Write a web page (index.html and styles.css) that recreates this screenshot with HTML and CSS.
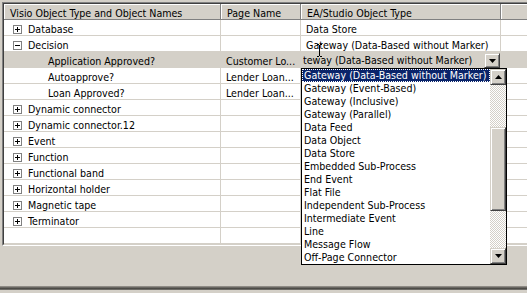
FILE: index.html
```html
<!DOCTYPE html>
<html>
<head>
<meta charset="utf-8">
<link rel="stylesheet" href="styles.css">
</head>
<body>
<div class="window">
  <div class="grid">
    <div class="grid-in">
      <div class="row head">
        <div class="c c1">Visio Object Type and Object Names</div>
        <div class="c c2">Page Name</div>
        <div class="c c3">EA/Studio Object Type</div>
        <div class="c c4"></div>
      </div>
      <div class="row">
        <div class="c c1"><span class="exp plus"></span><span class="t">Database</span></div>
        <div class="c c2"></div>
        <div class="c c3"><span class="t">Data Store</span></div>
        <div class="c c4"></div>
      </div>
      <div class="row">
        <div class="c c1"><span class="exp"></span><span class="t">Decision</span></div>
        <div class="c c2"></div>
        <div class="c c3"><span class="t">Gateway (Data-Based without Marker)</span></div>
        <div class="c c4"></div>
      </div>
      <div class="row cur">
        <div class="c c1 child"><span class="t">Application Approved?</span></div>
        <div class="c c2"><span class="t">Customer Lo...</span></div>
        <div class="c c3 edit"><span class="t ct">teway (Data-Based without Marker)</span><span class="cbtn"><svg width="7" height="4" viewBox="0 0 7 4"><path d="M0 0h7L3.5 4z" fill="#000"/></svg></span></div>
        <div class="c c4"></div>
      </div>
      <div class="row">
        <div class="c c1 child"><span class="t">Autoapprove?</span></div>
        <div class="c c2"><span class="t">Lender Loan...</span></div>
        <div class="c c3"></div>
        <div class="c c4"></div>
      </div>
      <div class="row">
        <div class="c c1 child"><span class="t">Loan Approved?</span></div>
        <div class="c c2"><span class="t">Lender Loan...</span></div>
        <div class="c c3"></div>
        <div class="c c4"></div>
      </div>
      <div class="row">
        <div class="c c1"><span class="exp plus"></span><span class="t">Dynamic connector</span></div>
        <div class="c c2"></div><div class="c c3"></div><div class="c c4"></div>
      </div>
      <div class="row">
        <div class="c c1"><span class="exp plus"></span><span class="t">Dynamic connector.12</span></div>
        <div class="c c2"></div><div class="c c3"></div><div class="c c4"></div>
      </div>
      <div class="row">
        <div class="c c1"><span class="exp plus"></span><span class="t">Event</span></div>
        <div class="c c2"></div><div class="c c3"></div><div class="c c4"></div>
      </div>
      <div class="row">
        <div class="c c1"><span class="exp plus"></span><span class="t">Function</span></div>
        <div class="c c2"></div><div class="c c3"></div><div class="c c4"></div>
      </div>
      <div class="row">
        <div class="c c1"><span class="exp plus"></span><span class="t">Functional band</span></div>
        <div class="c c2"></div><div class="c c3"></div><div class="c c4"></div>
      </div>
      <div class="row">
        <div class="c c1"><span class="exp plus"></span><span class="t">Horizontal holder</span></div>
        <div class="c c2"></div><div class="c c3"></div><div class="c c4"></div>
      </div>
      <div class="row">
        <div class="c c1"><span class="exp plus"></span><span class="t">Magnetic tape</span></div>
        <div class="c c2"></div><div class="c c3"></div><div class="c c4"></div>
      </div>
      <div class="row">
        <div class="c c1"><span class="exp plus"></span><span class="t">Terminator</span></div>
        <div class="c c2"></div><div class="c c3"></div><div class="c c4"></div>
      </div>
      <div class="row">
        <div class="c c1"></div>
        <div class="c c2"></div><div class="c c3"></div><div class="c c4"></div>
      </div>
    </div>
  </div>
  <div class="edge"></div>

  <div class="listbox">
    <div class="items">
      <div class="item sel">Gateway (Data-Based without Marker)</div>
      <div class="item">Gateway (Event-Based)</div>
      <div class="item">Gateway (Inclusive)</div>
      <div class="item">Gateway (Parallel)</div>
      <div class="item">Data Feed</div>
      <div class="item">Data Object</div>
      <div class="item">Data Store</div>
      <div class="item">Embedded Sub-Process</div>
      <div class="item">End Event</div>
      <div class="item">Flat File</div>
      <div class="item">Independent Sub-Process</div>
      <div class="item">Intermediate Event</div>
      <div class="item">Line</div>
      <div class="item">Message Flow</div>
      <div class="item">Off-Page Connector</div>
    </div>
    <div class="sb">
      <div class="btn"><svg width="7" height="4" viewBox="0 0 7 4"><path d="M3.5 0L7 4H0z" fill="#000"/></svg></div>
      <div class="track top"></div>
      <div class="btn thumb"></div>
      <div class="track bot"></div>
      <div class="btn"><svg width="7" height="4" viewBox="0 0 7 4"><path d="M0 0h7L3.5 4z" fill="#000"/></svg></div>
    </div>
  </div>

  <svg class="ibeam" width="9" height="16" viewBox="0 0 9 16"><path d="M2 1.5h2M5 1.5h2M4.5 2v11M2 13.5h2M5 13.5h2" stroke="#000" stroke-width="1" fill="none"/></svg>
</div>
</body>
</html>
```

FILE: styles.css
```css
html, body {
  margin: 0;
  padding: 0;
  overflow: hidden;
}
body {
  background: #d4d0c8;
  font-family: "DejaVu Sans Condensed", "DejaVu Sans", sans-serif;
  font-stretch: semi-condensed;
  font-size: 10.6px;
  color: #000;
}
.window {
  position: relative;
  width: 527px;
  height: 293px;
  overflow: hidden;
}
.grid {
  margin: 2px 0 0 2px;
  width: 560px;
  border-top: 1px solid #808080;
  border-left: 1px solid #808080;
  border-bottom: 1px solid #fff;
}
.grid-in {
  border-top: 1px solid #404040;
  border-left: 1px solid #404040;
  border-bottom: 1px solid #d4d0c8;
  background: #fff;
}
.row {
  display: grid;
  grid-template-columns: 217px 80px 200px 1fr;
  height: 16px;
}
.c {
  box-sizing: border-box;
  height: 16px;
  border-right: 1px solid #d4d0c8;
  border-bottom: 1px solid #d4d0c8;
  display: flex;
  align-items: flex-start;
  white-space: nowrap;
  padding-left: 5px;
}
.c4 { border-right: none; }
.c1 { padding-left: 9px; }
.c1.child { padding-left: 44px; }
.t {
  line-height: 14px;
  margin-top: 2px;
}
.head .c {
  background: #d4d0c8;
  border-right: 1px solid #808080;
  border-bottom: 1px solid #808080;
  box-shadow: inset 1px 1px 0 #fff;
  padding-left: 6px;
  line-height: 14px;
  padding-top: 2px;
}
.head .c4 { border-right: none; }
.cur { background: #d4d0c8; }
.exp {
  flex: none;
  position: relative;
  width: 9px;
  height: 9px;
  box-sizing: border-box;
  border: 1px solid #808080;
  background: #fff;
  margin: 5px 6px 0 0;
}
.exp::before {
  content: "";
  position: absolute;
  left: 1px;
  top: 3px;
  width: 5px;
  height: 1px;
  background: #000;
}
.exp.plus::after {
  content: "";
  position: absolute;
  left: 3px;
  top: 1px;
  width: 1px;
  height: 5px;
  background: #000;
}
.edit { padding-left: 2px; }
.ct {
  flex: 1;
  margin-top: 1px;
  overflow: hidden;
}
.cbtn {
  flex: none;
  width: 16px;
  height: 15px;
  margin-top: 1px;
  box-sizing: border-box;
  background: #d4d0c8;
  border: 1px solid;
  border-color: #d4d0c8 #404040 #404040 #d4d0c8;
  box-shadow: inset 1px 1px 0 #fff, inset -1px -1px 0 #808080;
  display: flex;
  align-items: center;
  justify-content: center;
}
.cbtn svg { display: block; }
.edge {
  margin-top: 40px;
  height: 4px;
  background: linear-gradient(#a09c96, #4a4844 60%, #7c7a76);
}
.listbox {
  position: absolute;
  left: 301px;
  top: 68px;
  width: 206px;
  height: 197px;
  box-sizing: border-box;
  border: 1px solid #000;
  background: #fff;
  display: flex;
}
.items {
  flex: 1;
  min-width: 0;
}
.item {
  height: 13px;
  line-height: 13px;
  padding-left: 2px;
  white-space: nowrap;
  overflow: hidden;
}
.item.sel {
  background: #0a246a;
  color: #fff;
  outline: 1px dotted #fff;
  outline-offset: -1px;
}
.sb {
  width: 16px;
  flex: none;
  display: flex;
  flex-direction: column;
}
.btn {
  flex: none;
  width: 16px;
  height: 16px;
  box-sizing: border-box;
  background: #d4d0c8;
  border: 1px solid;
  border-color: #d4d0c8 #404040 #404040 #d4d0c8;
  box-shadow: inset 1px 1px 0 #fff, inset -1px -1px 0 #808080;
  display: flex;
  align-items: center;
  justify-content: center;
}
.btn svg { display: block; }
.track {
  background: repeating-conic-gradient(#d4d0c8 0 25%, #fff 0 50%) 0 0 / 2px 2px;
}
.track.top { height: 42px; }
.thumb { height: 84px; }
.track.bot { flex: 1; }
.ibeam {
  position: absolute;
  left: 315px;
  top: 43px;
}
```
